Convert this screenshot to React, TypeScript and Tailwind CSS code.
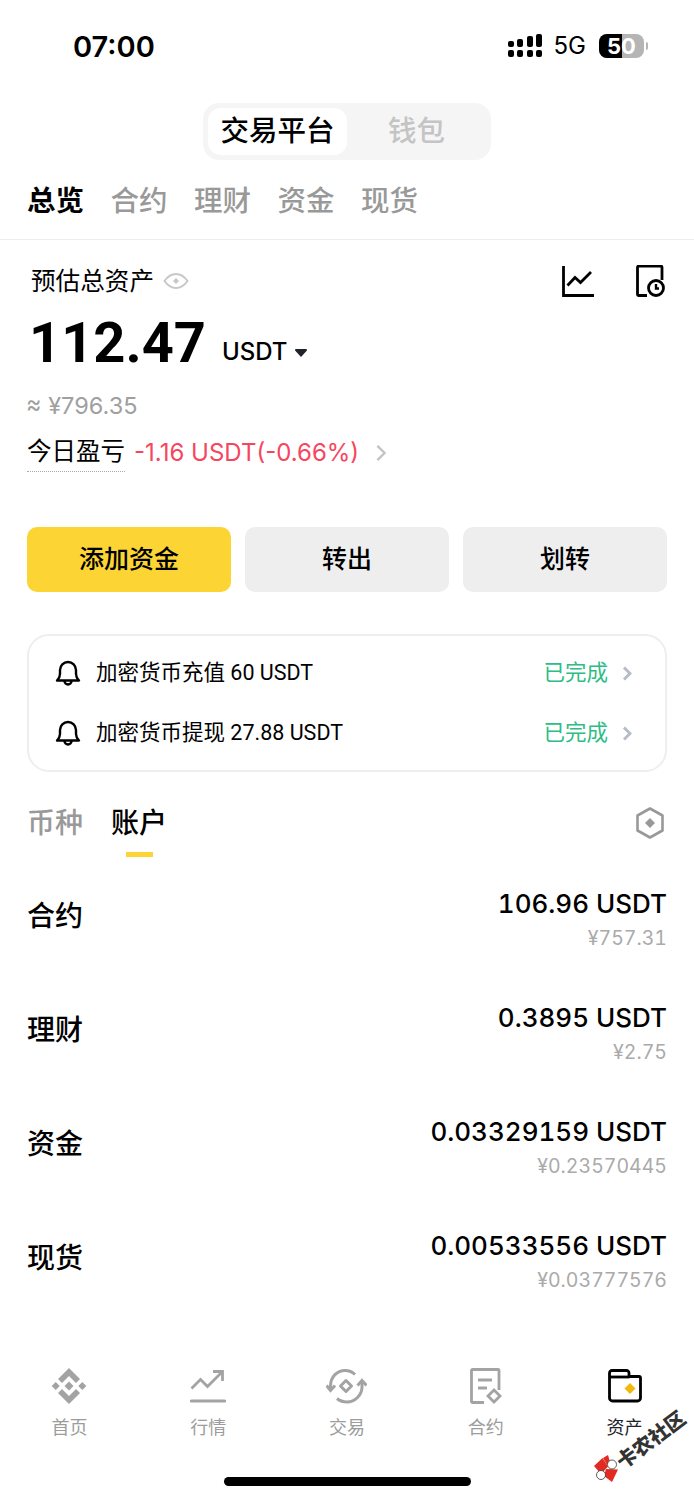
import type { ReactNode } from 'react';

const FONT = 'font-[Inter,"Noto_Sans_CJK_SC",sans-serif]';

const topTabs = ['总览', '合约', '理财', '资金', '现货'];

const accounts = [
  { name: '合约', usdt: '106.96 USDT', cny: '¥757.31' },
  { name: '理财', usdt: '0.3895 USDT', cny: '¥2.75' },
  { name: '资金', usdt: '0.03329159 USDT', cny: '¥0.23570445' },
  { name: '现货', usdt: '0.00533556 USDT', cny: '¥0.03777576' },
];

const notices = ['加密货币充值 60 USDT', '加密货币提现 27.88 USDT'];

function Signal() {
  return (
    <svg width="35" height="24" viewBox="0 0 35 24" fill="#000" aria-hidden="true">
      <rect x="0" y="7" width="6" height="6" rx="2" />
      <rect x="9" y="5" width="6" height="8" rx="2" />
      <rect x="19" y="2" width="6" height="11" rx="2" />
      <rect x="28" y="0" width="6" height="13" rx="2" />
      <rect x="0" y="16" width="6" height="7" rx="2" />
      <rect x="9" y="16" width="6" height="7" rx="2" />
      <rect x="19" y="16" width="6" height="7" rx="2" />
      <rect x="28" y="16" width="6" height="7" rx="2" />
    </svg>
  );
}

function Battery() {
  return (
    <div className="flex items-center">
      <div className="relative flex h-[24px] w-[45px] overflow-hidden rounded-[8px] bg-[#b5b5b5]">
        <div className="h-full w-[23px] bg-black" />
        <span className="absolute inset-0 flex items-center justify-center text-[22px] leading-none font-bold text-white">
          50
        </span>
      </div>
      <div className="ml-[2px] h-[8px] w-[2px] rounded-r-full bg-[#b5b5b5]" />
    </div>
  );
}

function Bell() {
  return (
    <svg width="26" height="26" viewBox="0 0 26 26" fill="none" stroke="#000" strokeWidth="2.400" aria-hidden="true">
      <path d="M2 20.500c2-2 3-3.500 3-6.500V10a8 8 0 0 1 16 0v4c0 3 1 4.500 3 6.500z" strokeLinejoin="round" />
      <path d="M9.500 21a3.500 3.500 0 0 0 7 0" />
    </svg>
  );
}

function Chevron({ color, size = 14, weight = 2 }: { color: string; size?: number; weight?: number }) {
  return (
    <svg width={size} height={size * 1.5} viewBox="0 0 10 15" fill="none" stroke={color} strokeWidth={weight} aria-hidden="true">
      <path d="M2 1.500 8 7.500 2 13.500" />
    </svg>
  );
}

function NavItem({ label, active, children }: { label: string; active?: boolean; children: ReactNode }) {
  return (
    <div className="flex flex-col items-center">
      <div className="flex h-[40px] w-[44px] items-center justify-center">{children}</div>
      <span className={`mt-[11px] text-[18px] leading-[22px] ${active ? 'text-[#1e2329]' : 'text-[#9c9c9c]'}`}>{label}</span>
    </div>
  );
}

function Watermark() {
  return (
    <div className="absolute top-[1400px] left-[590px] h-[84px] w-[104px]">
      <svg className="absolute top-[55px] left-[3px]" width="27" height="27" viewBox="0 0 27 27" aria-hidden="true">
        <path d="M1 11 9.500 3 15 11.500 8 19z" fill="#e22a22" />
        <path d="M10 3 15 0 17 7 14 10z" fill="#e22a22" />
        <path d="M13 14 25 14.500 19 27 11 21z" fill="#e22a22" />
        <circle cx="19" cy="9.500" r="4.500" fill="#fff" stroke="#333" strokeWidth="0.800" />
        <circle cx="8" cy="20" r="4.500" fill="#fff" stroke="#333" strokeWidth="0.800" />
      </svg>
      <span className="absolute top-[30px] left-[21px] origin-center -rotate-[37deg] text-[20px] leading-none font-black whitespace-nowrap text-[#333]">
        卡农社区
      </span>
    </div>
  );
}

export default function App() {
  return (
    <div className={`relative flex h-[1500px] w-[694px] flex-col overflow-hidden bg-white text-black ${FONT}`}>
      {/* status bar */}
      <div className="flex h-[92px] items-center justify-between pr-[46px] pl-[73px]">
        <span className="text-[29px] leading-none font-semibold">07:00</span>
        <div className="flex items-center">
          <Signal />
          <span className="mr-[13px] ml-[11px] text-[24px] leading-none">5G</span>
          <Battery />
        </div>
      </div>

      {/* platform switch */}
      <div className="mt-[11px] flex h-[57px] w-[288px] self-center rounded-[16px] bg-[#f5f5f5] p-[5px]">
        <div className="flex w-[139px] items-center justify-center rounded-[13px] bg-white text-[28.500px] font-medium">交易平台</div>
        <div className="flex flex-1 items-center justify-center text-[28.500px] font-medium text-[#c4c4c4]">钱包</div>
      </div>

      {/* section tabs */}
      <div className="flex h-[80px] items-center gap-[26.500px] border-b border-[#eeeeee] pt-[4px] pl-[27px]">
        {topTabs.map((tab, i) => (
          <span key={tab} className={`text-[28.500px] leading-none ${i === 0 ? 'font-bold text-black' : 'font-medium text-[#999999]'}`}>
            {tab}
          </span>
        ))}
      </div>

      {/* balance */}
      <div className="mt-[22px] flex h-[38px] items-center justify-between pr-[28px] pl-[31px]">
        <div className="flex items-center gap-[9px]">
          <span className="text-[24.600px] leading-none">预估总资产</span>
          <svg width="26" height="18" viewBox="0 0 26 18" fill="none" stroke="#c8c8c8" strokeWidth="2" aria-hidden="true">
            <path d="M1.500 9C5 4 9 2 13 2s8 2 11.500 7C21 14 17 16 13 16S5 14 1.500 9z" />
            <path d="M13 6l3 3-3 3-3-3z" fill="#c8c8c8" stroke="none" />
          </svg>
        </div>
        <div className="flex items-center gap-[42px]">
          <svg width="32" height="32" viewBox="0 0 32 32" fill="none" stroke="#000" strokeWidth="2.800" aria-hidden="true">
            <path d="M1.500 1v29.500H32" />
            <path d="M5.500 20.500 13 12.500l5.500 5L29 7" />
          </svg>
          <svg width="30" height="32" viewBox="0 0 30 32" fill="none" stroke="#000" strokeWidth="2.800" aria-hidden="true">
            <path d="M11 30.500H3a1.500 1.500 0 0 1-1.500-1.500V2.500A1.500 1.500 0 0 1 3 1h21.500A1.500 1.500 0 0 1 26 2.500V15" />
            <circle cx="20" cy="23" r="7.500" />
            <path d="M20 19v4.500h3" strokeWidth="2.400" />
          </svg>
        </div>
      </div>

      <div className="mt-[7px] flex items-baseline pl-[29px]">
        <span className="font-[Roboto,sans-serif] text-[56px] leading-[72px] font-bold">112.47</span>
        <span className="ml-[16px] -translate-y-[2px] text-[24px] leading-none font-medium">USDT</span>
        <svg className="ml-[8px] -translate-y-[4px]" width="12" height="9" viewBox="0 0 12 9" fill="#1e2329" aria-hidden="true">
          <path d="M1 0h10a1 1 0 0 1 .7 1.700L6 8 .3 1.700A1 1 0 0 1 1 0z" />
        </svg>
      </div>

      <div className="mt-[11px] pl-[26px] text-[23.500px] leading-[32px] text-[#a0a0a0]">≈ ¥796.35</div>

      <div className="mt-[11px] flex h-[40px] items-center pl-[27px]">
        <span className="border-b border-dotted border-[#aaaaaa] pb-[4px] text-[24.500px] leading-[32px]">今日盈亏</span>
        <span className="ml-[9px] text-[24px] leading-none text-[#f6465d]">-1.16 USDT(-0.66%)</span>
        <span className="ml-[16px]">
          <Chevron color="#c4c4c4" size={12} />
        </span>
      </div>

      {/* actions */}
      <div className="mt-[54px] grid grid-cols-3 gap-[14px] px-[27px]">
        <button className="h-[65px] rounded-[10px] bg-[#fcd535] text-[25px] font-medium text-black">添加资金</button>
        <button className="h-[65px] rounded-[10px] bg-[#eeeeee] text-[25px] font-medium text-black">转出</button>
        <button className="h-[65px] rounded-[10px] bg-[#eeeeee] text-[25px] font-medium text-black">划转</button>
      </div>

      {/* notices */}
      <div className="mx-[27px] mt-[42px] flex h-[138px] flex-col justify-center gap-[20px] rounded-[22px] border-2 border-[#eeeeee] pr-[33px] pl-[26px]">
        {notices.map((notice) => (
          <div key={notice} className="flex h-[40px] items-center">
            <Bell />
            <span className='ml-[15px] flex-1 font-[Roboto,"Noto_Sans_CJK_SC",sans-serif] text-[21.500px] leading-none'>{notice}</span>
            <span className="mr-[14px] text-[21.500px] leading-none text-[#2ebd85]">已完成</span>
            <Chevron color="#b7bdc6" size={10} weight={3} />
          </div>
        ))}
      </div>

      {/* asset tabs */}
      <div className="mt-[27px] flex items-start justify-between pr-[30px] pl-[27px]">
        <div className="flex gap-[28px]">
          <span className="text-[28px] leading-[48px] font-medium text-[#999999]">币种</span>
          <div className="flex flex-col items-center">
            <span className="text-[28px] leading-[48px] font-medium">账户</span>
            <div className="mt-[5px] h-[5px] w-[27px] bg-[#fcd535]" />
          </div>
        </div>
        <svg className="mt-[8px]" width="28" height="32" viewBox="0 0 28 32" fill="none" stroke="#999" strokeWidth="2.600" aria-hidden="true">
          <path d="M14 1.500 26.500 8.500v15L14 30.500 1.500 23.500v-15z" strokeLinejoin="round" />
          <path d="M14 11l5 5-5 5-5-5z" fill="#999" stroke="none" />
        </svg>
      </div>

      {/* accounts */}
      <div className="mt-[25px] flex flex-col gap-[46px] px-[27px]">
        {accounts.map((account) => (
          <div key={account.name} className="flex h-[68px] items-center justify-between">
            <span className="text-[28px] leading-none font-medium">{account.name}</span>
            <div className="mt-[9px] flex flex-col items-end tabular-nums">
              <span className="text-[26px] leading-[35px] font-medium">{account.usdt}</span>
              <span className="text-[19.500px] leading-[35px] text-[#aaaaaa]">{account.cny}</span>
            </div>
          </div>
        ))}
      </div>

      {/* bottom nav */}
      <div className="mt-auto grid grid-cols-5">
        <NavItem label="首页">
          <svg width="36" height="36" viewBox="0 0 36 36" fill="#a3a3a3" aria-hidden="true">
            <path d="M18 0 29 11 25 15 18 8 11 15 7 11z" />
            <path d="M4.700 14l4 4-4 4-4-4z" />
            <path d="M31.300 14l4 4-4 4-4-4z" />
            <path d="M18 13.500l4.500 4.500-4.500 4.500-4.500-4.500z" />
            <path d="M18 36 7 25 11 21 18 28 25 21 29 25z" />
          </svg>
        </NavItem>
        <NavItem label="行情">
          <svg width="36" height="36" viewBox="0 0 36 36" fill="none" stroke="#a3a3a3" strokeWidth="2.800" aria-hidden="true">
            <path d="M1.500 33h33" strokeWidth="3.200" strokeLinecap="round" />
            <path d="M1.500 20.500 10.500 11.500l7 7L32 4" />
            <path d="M23 3.500h9.500V13" />
          </svg>
        </NavItem>
        <NavItem label="交易">
          <svg width="41" height="36" viewBox="0 0 41 36" fill="none" stroke="#a3a3a3" strokeWidth="3" aria-hidden="true">
            <path d="M4.500 22V18C4.500 9 11 2.500 19 2.500c4 0 7 1 10 4" />
            <path d="M36 13V19C36 27 29 34 21 34c-4 0-7-1-10-3.500" />
            <path d="M.5 17.500l4 5 4.500-5" />
            <path d="M31.500 17.500 36 12.500l4.500 5" />
            <path d="M20 12.500l5.500 5.500-5.500 5.500-5.500-5.500z" strokeLinejoin="round" />
          </svg>
        </NavItem>
        <NavItem label="合约">
          <svg width="32" height="36" viewBox="0 0 32 36" fill="none" stroke="#a3a3a3" strokeWidth="2.800" aria-hidden="true">
            <path d="M14 34.500H2.500a1 1 0 0 1-1-1v-31a1 1 0 0 1 1-1H28a1 1 0 0 1 1 1V22" />
            <path d="M8 12h14M8 20h9" />
            <path d="M24 22l6 6-6 6-6-6z" />
          </svg>
        </NavItem>
        <NavItem label="资产" active>
          <svg width="34" height="34" viewBox="0 0 34 34" fill="none" aria-hidden="true">
            <path
              d="M1.500 29V4a2.500 2.500 0 0 1 2.500-2.500h14.500A2.500 2.500 0 0 1 21 4v3.500h10A1.500 1.500 0 0 1 32.500 9v20a3 3 0 0 1-3 3H4.500a3 3 0 0 1-3-3z"
              stroke="#000"
              strokeWidth="2.800"
            />
            <path d="M1.500 8h20" stroke="#000" strokeWidth="2.800" />
            <path d="M22 14l5.500 5.500L22 25l-5.500-5.500z" fill="#f0b90b" />
          </svg>
        </NavItem>
      </div>

      {/* home indicator */}
      <div className="mt-[38px] mb-[14px] h-[9px] w-[247px] self-center rounded-full bg-black" />

      <Watermark />
    </div>
  );
}
